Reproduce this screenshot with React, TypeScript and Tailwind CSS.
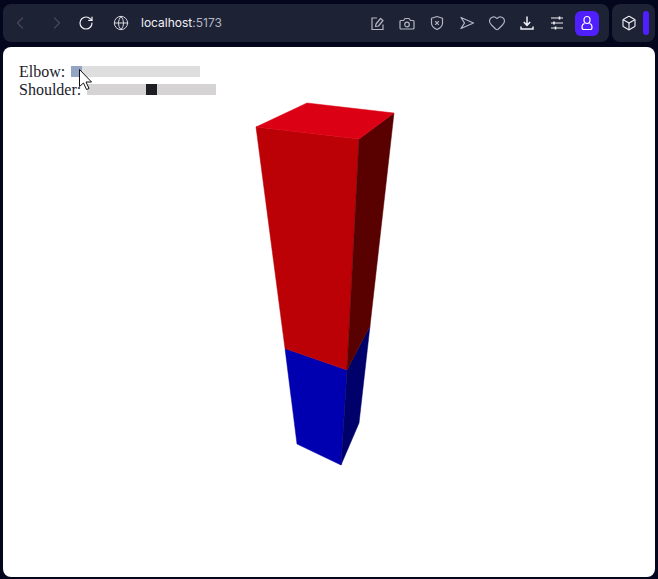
import { Box, ChevronLeft, ChevronRight, Globe, Heart, RotateCw } from "lucide-react";

const greyIcon = "h-[16px] w-[16px] text-[#b4b5c0]";
const whiteIcon = "h-[16px] w-[16px] text-[#f0f0f4]";

const SliderRow = ({ label, trackClass, thumbClass, thumbOffset }: { label: string; trackClass: string; thumbClass: string; thumbOffset: string }) => (
  <div className="flex h-[18px] items-center leading-[18px]">
    <span>{label}</span>
    <div className={`mb-[2px] ml-[6px] h-[11px] w-[129px] ${trackClass}`}>
      <div className={`h-[11px] w-[11px] ${thumbOffset} ${thumbClass}`} />
    </div>
  </div>
);

const App = () => {
  return (
    <div className="flex h-[579px] w-[658px] flex-col overflow-hidden bg-[#03061c] px-[3px] pt-[4px] pb-[2px]">
      <div className="flex h-[38px] shrink-0 gap-[3px]">
        <div className="flex w-[606px] items-center rounded-[8px] bg-[#1e2235]">
          <ChevronLeft strokeWidth={1.5} className="ml-[7px] h-[20px] w-[20px] text-[#4a4658]" />
          <ChevronRight strokeWidth={1.5} className="ml-[17px] h-[20px] w-[20px] text-[#4a4658]" />
          <RotateCw strokeWidth={1.8} className="ml-[11px] h-[16px] w-[16px] text-[#f0f0f4]" />
          <Globe strokeWidth={1.5} className="ml-[19px] h-[16px] w-[16px] text-[#d6d7de]" />
          <div className="ml-[12px] font-['Inter',sans-serif] text-[12px] text-[#f2f2f6]">
            localhost<span className="text-[#b4b6c2]">:5173</span>
          </div>
          <div className="ml-auto flex items-center gap-[14px]">
            <svg viewBox="0 0 16 16" fill="none" stroke="currentColor" strokeWidth="1.2" className={greyIcon}>
              <path d="M8 3H3v11.500h11V9.500" />
              <path d="M6.500 11.500 7 9l4.500-5.500 2.500 2L9.500 11Z" strokeLinejoin="round" />
            </svg>
            <svg viewBox="0 0 16 16" fill="none" stroke="currentColor" strokeWidth="1.2" className={greyIcon}>
              <path d="M2 5.500h2.500L6 3.500h4l1.500 2H14a1 1 0 0 1 1 1V13a1 1 0 0 1-1 1H2a1 1 0 0 1-1-1V6.500a1 1 0 0 1 1-1Z" strokeLinejoin="round" />
              <circle cx="8" cy="9.500" r="2.300" />
            </svg>
            <svg viewBox="0 0 16 16" fill="none" stroke="currentColor" strokeWidth="1.2" className={greyIcon}>
              <path d="M8 1.500 2.500 3.200v5c0 3 2.500 5 5.500 6.300 3-1.300 5.500-3.300 5.500-6.300v-5Z" strokeLinejoin="round" />
              <path d="M6.200 6.200l3.600 3.600M9.800 6.200l-3.600 3.600" />
            </svg>
            <svg viewBox="0 0 16 16" fill="none" stroke="currentColor" strokeWidth="1.3" strokeLinejoin="round" className={greyIcon}>
              <path d="M2 2.500 14.500 8 2 13.500 5.500 8Z" />
            </svg>
            <Heart strokeWidth={1.5} className="-mx-[1px] h-[18px] w-[18px] text-[#b4b5c0]" />
            <svg viewBox="0 0 16 16" fill="none" stroke="currentColor" strokeWidth="1.5" className={whiteIcon}>
              <path d="M8 1.500v8.500M4.800 7 8 10.300 11.200 7" />
              <path d="M2 11.500v2.500h12v-2.500" />
            </svg>
            <svg viewBox="0 0 16 16" fill="none" stroke="currentColor" strokeWidth="1.200" className={whiteIcon}>
              <path d="M2 3h12M2 8h12M2 13h12" />
              <path d="M10.500 1.500v3M5 6.500v3M6.500 11.500v3" strokeWidth="1.600" />
            </svg>
          </div>
          <div className="mr-[10px] ml-[10px] flex h-[25px] w-[24px] items-center justify-center rounded-[6px] bg-[#4f1fff]">
            <svg viewBox="0 0 16 16" fill="none" stroke="white" strokeWidth="1.200" className="h-[16px] w-[16px]">
              <rect x="5" y="1.500" width="6" height="7" rx="3" />
              <path d="M5.500 8.500C3.500 9 3 10.500 3 12.500c0 1.200.8 2 2 2h6c1.200 0 2-.8 2-2 0-2-.5-3.500-2.500-4" />
            </svg>
          </div>
        </div>
        <div className="flex w-[43px] items-center rounded-[8px] bg-[#1e2235]">
          <Box strokeWidth={1.7} className="ml-[9px] h-[16px] w-[16px] text-[#eeeef2]" />
          <div className="ml-[6px] h-[24px] w-[6px] rounded-[3px] bg-[#4f1fff]" />
        </div>
      </div>

      <div className="relative mt-[5px] grow rounded-[8px] bg-white pt-[16px] pl-[16px] font-['Liberation_Serif',serif] text-[16px] text-[#1b1b2b]">
        <SliderRow label="Elbow:" trackClass="bg-[#dedede]" thumbClass="bg-[#93a5c3]" thumbOffset="ml-0" />
        <SliderRow label="Shoulder:" trackClass="bg-[#d5d3d3]" thumbClass="bg-[#1e1e22]" thumbOffset="ml-[59px]" />

        {/* scene, viewBox is in page coordinates */}
        <svg viewBox="3 47 652 530" strokeWidth="0.5" className="absolute top-0 left-0 h-[530px] w-[652px]">
          <polygon points="285,348.500 347,370 341,465 297,444" fill="#0000b0" stroke="#0000b0" />
          <polygon points="347,370 370,326 359,423 341,465" fill="#00006a" stroke="#00006a" />
          <polygon points="256,127 359,139 347,370 285,348.500" fill="#bb0006" stroke="#bb0006" />
          <polygon points="359,139 394,113 370,326 347,370" fill="#590000" stroke="#590000" />
          <polygon points="256,127 307,103 394,113 359,139" fill="#dc0014" stroke="#dc0014" />
          <path d="M79.500 69.500v17l4-3.500 3 6.500 2.500-1-3-6.500h5.500Z" fill="#fff" stroke="#111" strokeWidth="1" />
        </svg>
      </div>
    </div>
  );
};

export default App;
